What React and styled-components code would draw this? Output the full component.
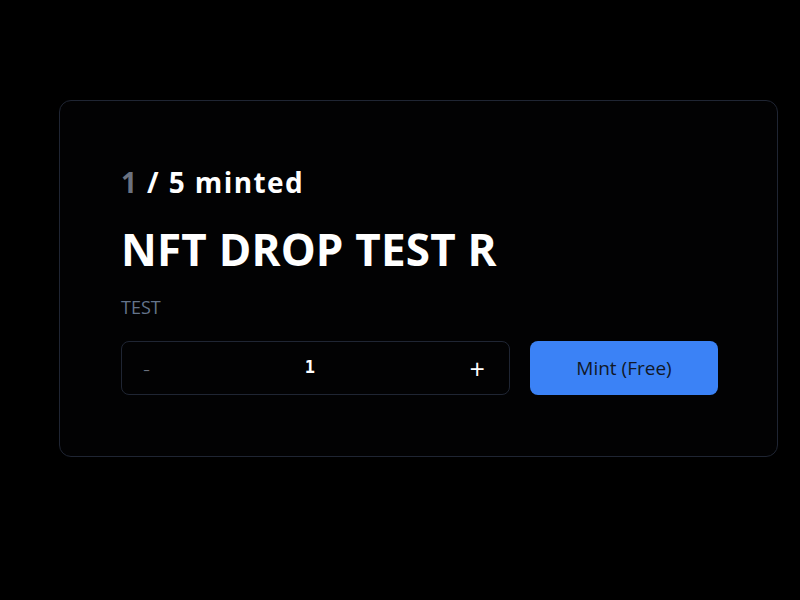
import styled, { createGlobalStyle } from "styled-components";

const GlobalStyle = createGlobalStyle`
  html, body {
    margin: 0;
    padding: 0;
    background: #000;
    font-family: "Open Sans", "Noto Sans", sans-serif;
  }
`;

const StyledPage = styled.div`
  padding: 100px 22px 0 59px;
`;

const StyledCard = styled.div`
  box-sizing: border-box;
  width: 719px;
  border: 1px solid #1f2533;
  border-radius: 12px;
  background: #020203;
  padding: 61px 59px 61px 61px;
`;

const StyledCount = styled.div`
  font-size: 28px;
  font-weight: 700;
  line-height: 40px;
  letter-spacing: 1.4px;
  color: #fff;
  span {
    color: #6b7280;
  }
`;

const StyledTitle = styled.h1`
  margin: 19px 0 0;
  font-size: 44px;
  font-weight: 700;
  line-height: 56px;
  letter-spacing: 0.2px;
  color: #fff;
`;

const StyledSubtitle = styled.p`
  margin: 18px 0 0;
  font-size: 18px;
  line-height: 24px;
  color: #64748b;
`;

const StyledRow = styled.div`
  display: flex;
  gap: 20px;
  margin-top: 22px;
`;

const StyledCounter = styled.div`
  flex: 1;
  height: 54px;
  box-sizing: border-box;
  border: 1px solid #1f2533;
  border-radius: 8px;
  display: flex;
  align-items: center;
  justify-content: space-between;
  padding: 0 16px 0 13px;
`;

const StyledStep = styled.button`
  background: none;
  border: none;
  font-family: inherit;
  font-size: ${(p) => (p.muted ? "22px" : "27px")};
  font-weight: ${(p) => (p.muted ? 300 : 400)};
  line-height: 1;
  padding: 0 8px;
  color: ${(p) => (p.muted ? "#6b7280" : "#fff")};
  cursor: pointer;
`;

const StyledQty = styled.span`
  font-family: "DejaVu Sans Mono", monospace;
  font-size: 17px;
  font-weight: 700;
  color: #fff;
  margin-bottom: 2px;
`;

const StyledMint = styled.button`
  width: 188px;
  height: 54px;
  border: none;
  border-radius: 8px;
  background: #3b82f6;
  color: #111827;
  font-family: inherit;
  font-size: 19px;
  cursor: pointer;
`;

const App = () => {
  return (
    <>
      <GlobalStyle />
      <StyledPage>
        <StyledCard>
          <StyledCount>
            <span>1</span> / 5 minted
          </StyledCount>
          <StyledTitle>NFT DROP TEST R</StyledTitle>
          <StyledSubtitle>TEST</StyledSubtitle>
          <StyledRow>
            <StyledCounter>
              <StyledStep muted>-</StyledStep>
              <StyledQty>1</StyledQty>
              <StyledStep>+</StyledStep>
            </StyledCounter>
            <StyledMint>Mint (Free)</StyledMint>
          </StyledRow>
        </StyledCard>
      </StyledPage>
    </>
  );
};

export default App;
